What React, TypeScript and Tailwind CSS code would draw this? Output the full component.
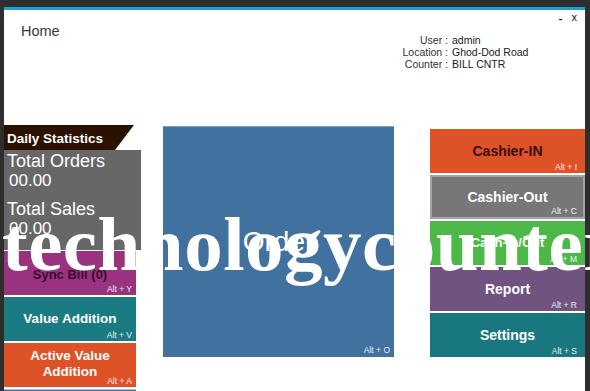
import React from "react";

const sans = { fontFamily: '"Liberation Sans", Arial, sans-serif' };

function Hint({ k, cls = "" }: { k: string; cls?: string }) {
  return (
    <span className={`absolute bottom-[1px] text-[8.5px] leading-[10px] font-normal text-white/90 ${cls}`}>{k}</span>
  );
}

export default function App() {
  return (
    <div className="w-[590px] h-[391px] overflow-hidden bg-[#2e2e2e] pt-[7px] pl-[4px] pr-[5px] relative" style={sans}>
      <div className="bg-white h-[384px] border-t-[3px] border-[#17a3d5] relative">
        {/* window controls */}
        <div className="absolute right-[8px] top-[0px] flex items-start gap-[9px] text-[#111] text-[11px]">
          <span className="leading-[14px] mt-[1px] font-bold">-</span>
          <span className="leading-[14px]">x</span>
        </div>
        {/* header */}
        <div className="flex h-[115px]">
          <div className="w-[384px] pl-[17px] pt-[11px] text-[14.5px] text-[#3a3a3a]">Home</div>
          <div className="grid grid-cols-[60px_100px] gap-x-[4px] mt-[24px] h-[36px] text-[10.5px] leading-[12px] text-[#1a1a1a]">
            <span className="text-right text-[#333]">User :</span>
            <span>admin</span>
            <span className="text-right text-[#333]">Location :</span>
            <span>Ghod-Dod Road</span>
            <span className="text-right text-[#333]">Counter :</span>
            <span>BILL CNTR</span>
          </div>
        </div>
        {/* main */}
        <div className="flex items-start">
          {/* left column */}
          <div className="w-[137px] flex flex-col">
            <div className="w-[130px] h-[25px] bg-[#2b1100] [clip-path:polygon(0_0,100%_0,calc(100%-19px)_100%,0_100%)] pl-[3px] pt-[6px] text-[13.5px] leading-[15px] font-bold text-white">
              Daily Statistics
            </div>
            <div className="h-[100px] bg-[#676767] text-white pl-[3px] pt-[1px]">
              <div className="text-[18px] leading-[20px]">Total Orders</div>
              <div className="text-[17px] leading-[19px] pl-[2px]">00.00</div>
              <div className="text-[18px] leading-[20px] mt-[9px]">Total Sales</div>
              <div className="text-[17px] leading-[19px] pl-[2px]">00.00</div>
            </div>
            <div className="w-[132px] flex flex-col gap-[2px] mt-[1px]">
              <div className="relative h-[44px] bg-[#99327f] flex items-center justify-center pt-[4px] text-[13px] font-bold text-[#3b0b2c]">
                Sync Bill (0)
                <Hint k="Alt + Y" cls="right-[4px]" />
              </div>
              <div className="relative h-[44px] bg-[#1b7b83] flex items-center justify-center text-[13.5px] font-bold text-white">
                Value Addition
                <Hint k="Alt + V" cls="right-[4px]" />
              </div>
              <div className="relative h-[44px] bg-[#de5227] flex items-center justify-center text-center text-[13.5px] leading-[16px] font-bold text-white pb-[2px]">
                <span>Active Value<br />Addition</span>
                <Hint k="Alt + A" cls="right-[4px]" />
              </div>
              <div className="h-[44px] bg-[#41719f] border-t border-[#a9c0d6]" />
            </div>
          </div>
          {/* order tile */}
          <div className="relative ml-[22px] mt-[1px] w-[231px] h-[231px] bg-[#41719f] border-t border-[#7d9fc2] flex items-center justify-center text-white text-[28px] leading-[32px]">
            Order
            <Hint k="Alt + O" cls="right-[4px] bottom-[2px]" />
          </div>
          {/* right column */}
          <div className="ml-[36px] mt-[4px] w-[155px] flex flex-col gap-[2px]">
            <div className="relative h-[44px] bg-[#de5227] flex items-center justify-center text-[14px] font-bold text-[#3a0c03]">
              Cashier-IN
              <Hint k="Alt + I" cls="right-[8px]" />
            </div>
            <div className="relative h-[44px] bg-[#777777] border-[2px] border-[#a3a3a3] flex items-center justify-center text-[14px] font-bold text-white">
              Cashier-Out
              <Hint k="Alt + C" cls="right-[6px] bottom-[0px]" />
            </div>
            <div className="relative h-[44px] bg-[#4bb848] flex items-center justify-center text-[13px] font-bold text-white">
              Cash-In/Out
              <Hint k="Alt + M" cls="right-[8px]" />
            </div>
            <div className="relative h-[44px] bg-[#71537f] flex items-center justify-center text-[14px] font-bold text-white">
              Report
              <Hint k="Alt + R" cls="right-[8px]" />
            </div>
            <div className="relative h-[44px] bg-[#19777f] flex items-center justify-center text-[14px] font-bold text-white">
              Settings
              <Hint k="Alt + S" cls="right-[8px]" />
            </div>
          </div>
        </div>
      </div>
      {/* watermark */}
      <div
        className="absolute left-[2px] top-[206px] whitespace-nowrap text-white text-[77px] leading-none font-bold tracking-[0.5px] pointer-events-none"
        style={{ fontFamily: '"Liberation Serif", "Times New Roman", serif' }}
      >
        technologycounter
      </div>
    </div>
  );
}
